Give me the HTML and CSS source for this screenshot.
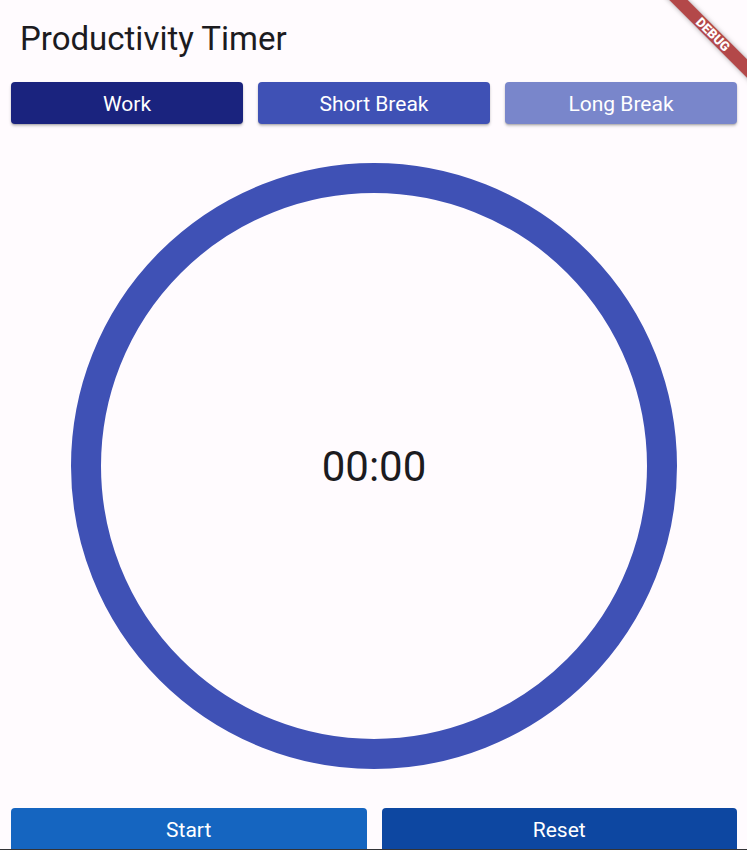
FILE: index.html
```html
<!DOCTYPE html>
<html lang="en">
<head>
<meta charset="utf-8">
<title>Productivity Timer</title>
<link rel="stylesheet" href="styles.css">
</head>
<body>
<div class="app">
  <header class="appbar">
    <h1 class="title">Productivity Timer</h1>
  </header>
  <div class="modes">
    <button class="btn mode work">Work</button>
    <button class="btn mode short">Short Break</button>
    <button class="btn mode long">Long Break</button>
  </div>
  <main class="timer-area">
    <div class="ring">
      <svg class="ring-svg" width="606" height="606" viewBox="0 0 606 606">
        <circle cx="303" cy="303" r="288" fill="none" stroke="#3f51b5" stroke-width="30"/>
      </svg>
      <div class="time">00:00</div>
    </div>
  </main>
  <div class="controls">
    <button class="btn ctrl start">Start</button>
    <button class="btn ctrl reset">Reset</button>
  </div>
  <div class="edge"></div>
</div>
<div class="banner-clip">
  <div class="banner">DEBUG</div>
</div>
</body>
</html>
```

FILE: styles.css
```css
html, body {
  margin: 0;
  padding: 0;
  height: 100%;
}
body {
  background: #fffbfe;
  font-family: Roboto, "Noto Sans", sans-serif;
  color: #1c1b1f;
  overflow: hidden;
}
.app {
  height: 850px;
  display: flex;
  flex-direction: column;
}
.appbar {
  height: 78px;
  display: flex;
  align-items: center;
  padding-left: 20px;
  flex: none;
}
.title {
  margin: 0;
  font-size: 33px;
  font-weight: 400;
  line-height: 38px;
  color: #1c1b1f;
}
.modes {
  display: flex;
  gap: 15px;
  padding: 4px 10px 0 11px;
  flex: none;
}
.btn {
  border: none;
  color: #fff;
  font-family: Roboto, "Noto Sans", sans-serif;
  font-weight: 400;
  border-radius: 4px;
  cursor: pointer;
  padding: 0;
}
.mode {
  flex: 1;
  height: 42px;
  font-size: 21px;
  padding-top: 1px;
  box-shadow: 0 2px 3px rgba(0,0,0,0.22), 0 1px 1px rgba(0,0,0,0.12);
}
.work { background: #1a237e; }
.short { background: #3f51b5; }
.long { background: #7986cb; }
.timer-area {
  flex: 1;
  display: flex;
  align-items: center;
  justify-content: center;
  padding-left: 1px;
}
.ring {
  position: relative;
  width: 606px;
  height: 606px;
  display: flex;
  align-items: center;
  justify-content: center;
}
.ring-svg {
  position: absolute;
  left: 0;
  top: 0;
}
.time {
  position: relative;
  font-size: 42px;
  color: #1c1b1f;
  line-height: 1;
  margin-top: 2px;
}
.controls {
  display: flex;
  gap: 15px;
  padding: 0 10px 0 11px;
  flex: none;
  height: 41px;
}
.ctrl {
  flex: 1;
  height: 42px;
  font-size: 21px;
  padding-top: 1px;
  border-bottom-left-radius: 0;
  border-bottom-right-radius: 0;
}
.start { background: #1565c0; }
.reset { background: #0d47a1; }
.edge {
  height: 1px;
  background: #333336;
  flex: none;
  position: relative;
}
.banner-clip {
  position: absolute;
  top: 0;
  right: 0;
  width: 110px;
  height: 110px;
  overflow: hidden;
  pointer-events: none;
}
.banner {
  position: absolute;
  width: 130px;
  height: 13px;
  left: 11px;
  top: 28px;
  transform: rotate(45deg);
  background: rgba(160, 28, 28, 0.8);
  box-shadow: 0 0 5px rgba(0,0,0,0.35);
  color: #fff;
  font-family: Roboto, "Noto Sans", sans-serif;
  font-weight: 900;
  font-size: 13px;
  line-height: 13px;
  text-align: center;
}
```
